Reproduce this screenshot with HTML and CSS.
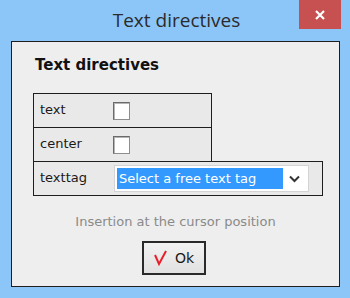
FILE: index.html
```html
<!DOCTYPE html>
<html lang="en">
<head>
    <meta charset="UTF-8">
    <title>Text directives</title>
    <link rel="stylesheet" href="styles.css">
</head>
<body>

<div class="window">
    <div class="titlebar">
        <span class="title">Text directives</span>
        <div class="close-btn">
            <svg width="10" height="10" viewBox="0 0 10 10">
                <path d="M1 1 L9 9 M9 1 L1 9" stroke="#fff" stroke-width="2.2" fill="none"/>
            </svg>
        </div>
    </div>

    <div class="dialog">
        <h1 class="heading">Text directives</h1>

        <div class="table">
            <div class="row row-first">
                <span class="label">text</span>
                <span class="checkbox"></span>
            </div>
            <div class="row row-mid">
                <span class="label">center</span>
                <span class="checkbox"></span>
            </div>
            <div class="row row-wide">
                <span class="label">texttag</span>
                <div class="select">
                    <span class="select-value">Select a free text tag</span>
                    <svg class="chevron" width="11" height="8" viewBox="0 0 11 8">
                        <path d="M1 1.5 L5.5 6 L10 1.5" stroke="#333" stroke-width="2" fill="none"/>
                    </svg>
                </div>
            </div>
        </div>

        <p class="hint">Insertion at the cursor position</p>

        <button class="ok-button">
            <svg width="13" height="16" viewBox="0 0 13 16">
                <path d="M1 5 L5 14 L12 1" stroke="#e8202a" stroke-width="2" fill="none"/>
            </svg>
            <span>Ok</span>
        </button>
    </div>
</div>

</body>
</html>
```

FILE: styles.css
```css
body {
    margin: 0;
    padding: 0;
    background-color: #8cc6f8;
    font-family: "DejaVu Sans", Verdana, sans-serif;
}

.window {
    width: 350px;
    height: 298px;
    box-sizing: border-box;
    padding: 0 10px 11px 11px;
    display: flex;
    flex-direction: column;
}

.titlebar {
    height: 41px;
    display: flex;
    justify-content: center;
    align-items: center;
    position: relative;
}

.title {
    font-family: "Open Sans", sans-serif;
    font-size: 19px;
    color: #2b2b2b;
    margin-left: 2px;
    margin-top: -1px;
}

.close-btn {
    position: absolute;
    top: 0;
    right: -1px;
    width: 42px;
    height: 29px;
    background-color: #c75050;
    display: flex;
    justify-content: center;
    align-items: center;
}

.dialog {
    flex: 1;
    background-color: #eeeeee;
    border: 1px solid #1e1e1e;
    display: flex;
    flex-direction: column;
    align-items: flex-start;
}

.heading {
    margin: 14px 0 0 23px;
    font-size: 15px;
    line-height: 18px;
    font-weight: bold;
    color: #111;
}

.table {
    margin: 19px 0 0 21px;
}

.row {
    display: flex;
    align-items: center;
    border: 1px solid #1e1e1e;
    background-color: #e9e9e9;
    box-sizing: border-box;
    font-size: 13px;
    color: #1a1a1a;
}

.row-first {
    width: 179px;
    height: 35px;
}

.row-mid {
    width: 179px;
    height: 33px;
    border-top: none;
    border-bottom: none;
}

.row-wide {
    width: 290px;
    height: 35px;
}

.label {
    width: 73px;
    padding-left: 6px;
    padding-bottom: 2px;
}

.checkbox {
    width: 15px;
    height: 16px;
    background: #fff;
    border: 1px solid #8e8e8e;
    border-top-color: #6a6a6a;
    border-left-color: #6a6a6a;
    box-shadow: inset 1px 1px 0 #b5b5b5;
}

.select {
    width: 195px;
    height: 27px;
    box-sizing: border-box;
    margin-left: 1px;
    background: #fff;
    border: 1px solid #d4d4d4;
    display: flex;
    align-items: center;
    padding: 0 8px 0 2px;
    justify-content: space-between;
}

.select-value {
    background-color: #3399ff;
    color: #fff;
    width: 166px;
    height: 21px;
    line-height: 21px;
    padding-left: 2px;
    box-sizing: border-box;
}

.hint {
    align-self: center;
    margin: 18px 0 0 0;
    font-size: 13px;
    line-height: 16px;
    color: #8a8a8a;
}

.ok-button {
    align-self: center;
    margin: 11px 0 0 -3px;
    width: 64px;
    height: 34px;
    border: 2px solid #2a2a2a;
    background: linear-gradient(#f2f2f2, #e1e1e1);
    display: flex;
    align-items: center;
    justify-content: center;
    gap: 8px;
    padding: 0;
    font-family: "DejaVu Sans", Verdana, sans-serif;
    font-size: 14px;
    color: #1a1a1a;
}
```
